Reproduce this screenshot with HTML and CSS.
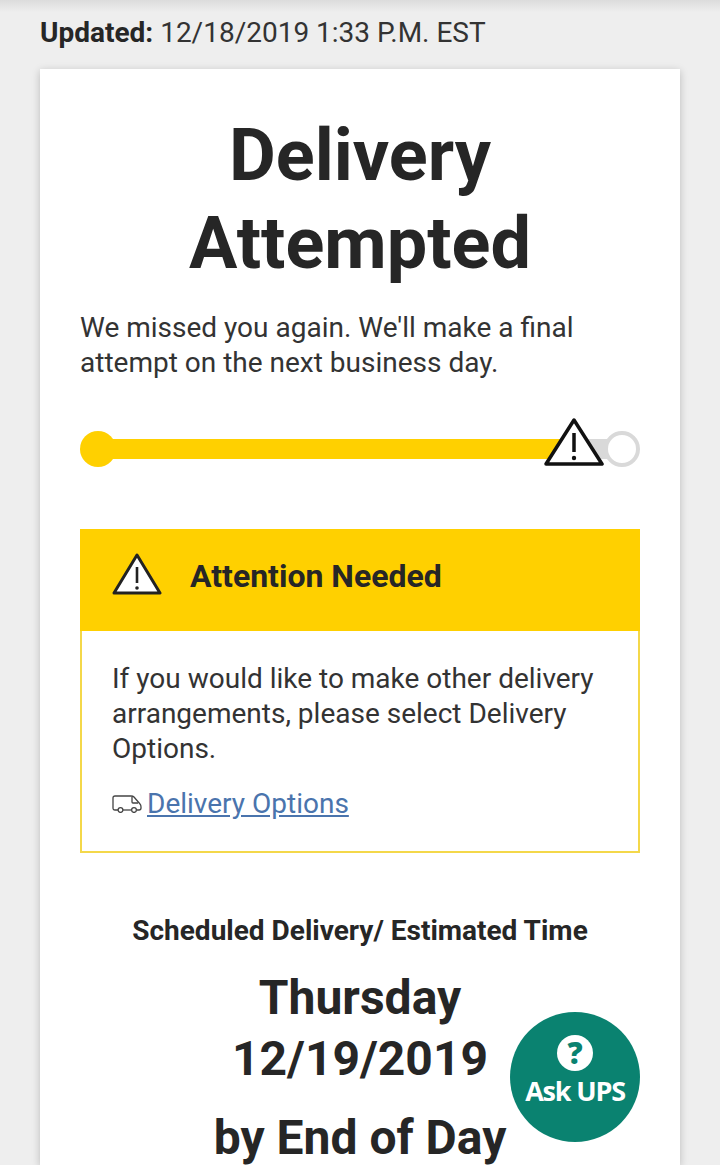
FILE: index.html
```html
<!DOCTYPE html>
<html lang="en">
<head>
    <meta charset="UTF-8">
    <meta name="viewport" content="width=device-width, initial-scale=1.0">
    <title>Tracking</title>
    <link rel="stylesheet" href="styles.css">
</head>
<body>
    <p class="updated"><strong>Updated:</strong> 12/18/2019 1:33 P.M. EST</p>

    <main class="card">
        <h1 class="status-title">Delivery<br>Attempted</h1>
        <p class="status-text">We missed you again. We'll make a final attempt on the next business day.</p>

        <div class="progress">
            <span class="progress-start"></span>
            <span class="progress-bar"><span class="progress-fill"></span></span>
            <span class="progress-end"></span>
            <svg class="progress-warning" viewBox="0 0 60 50">
                <path d="M30 3 L58 47 H2 Z" fill="#fff" stroke="#111" stroke-width="3.5" stroke-linejoin="round"/>
                <path d="M30 16 V35" stroke="#111" stroke-width="3.5"/>
                <circle cx="30" cy="41" r="2.2" fill="#111"/>
            </svg>
        </div>

        <section class="attention">
            <div class="attention-head">
                <svg class="attention-icon" viewBox="0 0 50 42">
                    <path d="M25 2 L48 40 H2 Z" fill="#fff" stroke="#222" stroke-width="3" stroke-linejoin="round"/>
                    <path d="M25 14 V30" stroke="#222" stroke-width="2.6"/>
                    <circle cx="25" cy="35" r="1.8" fill="#222"/>
                </svg>
                <span>Attention Needed</span>
            </div>
            <div class="attention-body">
                <p>If you would like to make other delivery arrangements, please select Delivery Options.</p>
                <div class="attention-link">
                    <svg class="truck-icon" viewBox="0 0 30 18" fill="none" stroke="#444" stroke-width="1.3">
                        <path d="M6 15 H3 Q1 15 1 13 V3 Q1 1 3 1 H19 Q21 1 22 2 L28 9 Q29 10 29 12 V13 Q29 15 27 15 H25"/>
                        <path d="M11 15 H19"/>
                        <path d="M20 2 V7 Q20 8 21 8 H26"/>
                        <circle cx="8.5" cy="15" r="2.4"/>
                        <circle cx="22" cy="15" r="2.4"/>
                    </svg>
                    <a href="#">Delivery Options</a>
                </div>
            </div>
        </section>

        <section class="schedule">
            <h2>Scheduled Delivery/ Estimated Time</h2>
            <p class="schedule-date">Thursday<br>12/19/2019</p>
            <p class="schedule-time">by End of Day</p>
        </section>
    </main>

    <div class="ask-button">
        <span class="ask-icon">?</span>
        <span class="ask-label">Ask UPS</span>
    </div>
</body>
</html>
```

FILE: styles.css
```css
html, body {
    height: 100%;
}

body {
    margin: 0;
    height: 1165px;
    overflow: hidden;
    position: relative;
    box-sizing: border-box;
    padding: 0 40px;
    font-family: Roboto, Arial, sans-serif;
    background-color: #eeeeee;
    background-image: linear-gradient(#dcdcdc, #eeeeee 12px);
    color: #262626;
}

.updated {
    margin: 0;
    padding-top: 17px;
    height: 69px;
    box-sizing: border-box;
    font-size: 28px;
    line-height: 32px;
    color: #333;
}

.updated strong {
    color: #262626;
}

.card {
    background-color: #fff;
    padding: 43px 40px 0;
    height: 1096px;
    box-sizing: border-box;
    box-shadow: 0 2px 8px rgba(0, 0, 0, 0.22);
}

.status-title {
    margin: 0;
    font-size: 72px;
    line-height: 88px;
    font-weight: 700;
    text-align: center;
}

.status-text {
    margin: 22px 0 0;
    font-size: 28px;
    line-height: 35px;
    color: #333;
}

.progress {
    position: relative;
    display: flex;
    align-items: center;
    margin-top: 51px;
    height: 36px;
}

.progress-start {
    width: 36px;
    height: 36px;
    margin-right: -10px;
    border-radius: 50%;
    background-color: #ffd000;
}

.progress-bar {
    flex: 1;
    height: 20px;
    background-color: #d9d9d9;
}

.progress-fill {
    display: block;
    width: 96%;
    height: 100%;
    background-color: #ffd000;
}

.progress-end {
    width: 36px;
    height: 36px;
    margin-left: -4px;
    box-sizing: border-box;
    border: 4px solid #d9d9d9;
    border-radius: 50%;
    background-color: #fff;
}

.progress-warning {
    position: absolute;
    right: 36px;
    top: -14px;
    width: 60px;
    height: 50px;
}

.attention {
    margin-top: 62px;
    border: 2px solid #f4d84a;
    border-top: none;
}

.attention-head {
    display: flex;
    align-items: center;
    gap: 28px;
    height: 102px;
    box-sizing: border-box;
    margin: 0 -2px;
    padding: 0 32px 8px;
    background-color: #ffd000;
    font-size: 32px;
    font-weight: 700;
}

.attention-icon {
    width: 50px;
    height: 42px;
    margin-bottom: 4px;
}

.attention-body {
    padding: 30px 30px 30px;
    font-size: 28px;
    line-height: 35px;
    color: #333;
}

.attention-body p {
    margin: 0;
}

.attention-link {
    display: flex;
    align-items: center;
    gap: 5px;
    margin-top: 20px;
}

.attention-link a {
    color: #4a74ad;
}

.truck-icon {
    width: 30px;
    height: 18px;
}

.schedule {
    text-align: center;
    margin-top: 60px;
}

.schedule h2 {
    margin: 0;
    font-size: 28px;
    line-height: 35px;
    font-weight: 700;
}

.schedule-date {
    margin: 19px 0 0;
    font-size: 48px;
    line-height: 61px;
    font-weight: 700;
}

.schedule-time {
    margin: 18px 0 0;
    font-size: 48px;
    line-height: 61px;
    font-weight: 700;
}

.ask-button {
    position: absolute;
    left: 510px;
    top: 1012px;
    width: 130px;
    height: 130px;
    border-radius: 50%;
    background-color: #0a8270;
    color: #fff;
    display: flex;
    flex-direction: column;
    align-items: center;
    font-family: "Open Sans", Arial, sans-serif;
}

.ask-icon {
    margin-top: 23px;
    width: 36px;
    height: 36px;
    border-radius: 50%;
    background-color: #fff;
    color: #0a8270;
    font-size: 30px;
    line-height: 36px;
    font-weight: 800;
    text-align: center;
}

.ask-label {
    margin-top: 2px;
    font-size: 27px;
    line-height: 36px;
    font-weight: 700;
    letter-spacing: -1.2px;
}
```
